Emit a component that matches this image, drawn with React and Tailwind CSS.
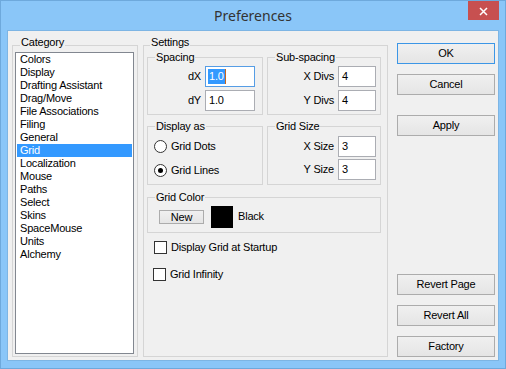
import React from "react";

const items = [
  "Colors",
  "Display",
  "Drafting Assistant",
  "Drag/Move",
  "File Associations",
  "Filing",
  "General",
  "Grid",
  "Localization",
  "Mouse",
  "Paths",
  "Select",
  "Skins",
  "SpaceMouse",
  "Units",
  "Alchemy",
];

function Group({ label, className, legendClass = "ml-[7px]", raise, children }) {
  return (
    <fieldset className={"border border-[#d5d5d5] min-w-0 " + className}>
      <legend className={"px-[1px] leading-[13px] " + legendClass}>
        <span className={raise ? "relative top-[-3px]" : ""}>{label}</span>
      </legend>
      {children}
    </fieldset>
  );
}

function TextBox({ value, w, focused }) {
  return (
    <div
      className={
        "h-[21px] bg-white border flex items-center pl-[2px] " +
        (focused ? "border-[#569de5] " : "border-[#abadb3] ") +
        w
      }
    >
      {focused ? (
        <span className="flex items-center">
          <span className="bg-[#3399ff] text-white leading-[15px] px-[1px]">{value}</span>
          <span className="w-[1px] h-[15px] bg-[#c8661e]" />
        </span>
      ) : (
        <span className="pl-[1px]">{value}</span>
      )}
    </div>
  );
}

function LabeledBox({ label, value, w, focused }) {
  return (
    <div className="flex items-center justify-end gap-[4px]">
      <span>{label}</span>
      <TextBox value={value} w={w} focused={focused} />
    </div>
  );
}

function Radio({ checked, label }) {
  return (
    <div className="h-[24px] flex items-center gap-[4px] pl-[6px]">
      <div className="w-[13px] h-[13px] rounded-full border border-[#333333] bg-white flex items-center justify-center">
        {checked && <div className="w-[5px] h-[5px] rounded-full bg-black" />}
      </div>
      <span>{label}</span>
    </div>
  );
}

function Check({ label, className }) {
  return (
    <div className={"flex items-center gap-[4px] h-[13px] " + className}>
      <div className="w-[13px] h-[13px] border border-[#333333] bg-white" />
      <span>{label}</span>
    </div>
  );
}

function Btn({ children, className = "", primary }) {
  return (
    <div
      className={
        "h-[21px] w-[98px] border bg-gradient-to-b from-[#f0f0f0] to-[#e5e5e5] flex items-center justify-center " +
        (primary ? "border-[#3c96e6] " : "border-[#acacac] ") +
        className
      }
    >
      {children}
    </div>
  );
}

export default function App() {
  return (
    <div className="w-[506px] h-[369px] bg-[#8ac6f8] border border-[#6ea9dc] flex flex-col relative overflow-hidden font-['Liberation_Sans',Arial,sans-serif] text-[11px] leading-[13px] tracking-[-0.2px] text-black">
      <div className="h-[29px] flex items-center justify-center relative">
        <span className="font-['Noto_Sans',sans-serif] text-[14px] tracking-normal text-[#333333] leading-[20px] mt-[1px]">
          Preferences
        </span>
        <div className="absolute top-[-1px] right-[6px] w-[31px] h-[20px] bg-[#c75050] flex items-center justify-center">
          <svg width="9" height="9" viewBox="0 0 9 9" className="mt-[2px]">
            <path d="M1 1L8 8M8 1L1 8" stroke="white" strokeWidth="1.5" />
          </svg>
        </div>
      </div>

      <div className="mx-[6px] h-[331px] border border-[#7db5e4] bg-[#f0f0f0] flex items-start">
        {/* Category */}
        <Group label="Category" raise className="ml-[4px] mt-[8px] w-[126px] h-[318px]">
          <div className="ml-[2px] w-[119px] h-[302px] border border-[#828790] bg-white px-[1px]">
            {items.map((it) => (
              <div
                key={it}
                className={
                  "h-[13px] leading-[13px] pl-[3px] " +
                  (it === "Grid" ? "bg-[#3399ff] text-white" : "")
                }
              >
                {it}
              </div>
            ))}
          </div>
        </Group>

        {/* Settings */}
        <Group
          label="Settings"
          raise
          legendClass="ml-[6px]"
          className="ml-[5px] mt-[8px] w-[245px] h-[318px]"
        >
          <div className="flex flex-col pl-[3px] mt-[-1px]">
            <div className="flex gap-[4px]">
              <Group label="Spacing" className="w-[116px] h-[64px]">
                <div className="flex flex-col gap-[3px] mt-[2px] pr-[7px]">
                  <LabeledBox label="dX" value="1.0" w="w-[50px]" focused />
                  <LabeledBox label="dY" value="1.0" w="w-[50px]" />
                </div>
              </Group>
              <Group label="Sub-spacing" className="w-[114px] h-[64px]">
                <div className="flex flex-col gap-[3px] mt-[2px] pr-[4px]">
                  <LabeledBox label="X Divs" value="4" w="w-[38px]" />
                  <LabeledBox label="Y Divs" value="4" w="w-[38px]" />
                </div>
              </Group>
            </div>

            <div className="flex gap-[4px] mt-[5px]">
              <Group label="Display as" className="w-[116px] h-[65px]">
                <div className="flex flex-col pt-[1px]">
                  <Radio label="Grid Dots" />
                  <Radio label="Grid Lines" checked />
                </div>
              </Group>
              <Group label="Grid Size" className="w-[114px] h-[65px]">
                <div className="flex flex-col gap-[2px] mt-[3px] pr-[4px]">
                  <LabeledBox label="X Size" value="3" w="w-[38px]" />
                  <LabeledBox label="Y Size" value="3" w="w-[38px]" />
                </div>
              </Group>
            </div>

            <Group label="Grid Color" className="mt-[6px] w-[234px] h-[42px]">
              <div className="flex items-center h-[22px] mt-[2px] pl-[11px]">
                <div className="w-[45px] h-[14px] border border-[#acacac] bg-gradient-to-b from-[#f0f0f0] to-[#e5e5e5] flex items-center justify-center">
                  New
                </div>
                <div className="ml-[7px] w-[22px] h-[22px] bg-black" />
                <span className="ml-[5px] mb-[2px]">Black</span>
              </div>
            </Group>

            <Check label="Display Grid at Startup" className="mt-[8px] ml-[7px]" />
            <Check label="Grid Infinity" className="mt-[14px] ml-[6px]" />
          </div>
        </Group>

        {/* Buttons */}
        <div className="ml-[9px] mt-[12px] h-[314px] flex flex-col justify-between">
          <div className="flex flex-col">
            <Btn primary>OK</Btn>
            <Btn className="mt-[10px]">Cancel</Btn>
            <Btn className="mt-[20px]">Apply</Btn>
          </div>
          <div className="flex flex-col">
            <Btn>Revert Page</Btn>
            <Btn className="mt-[10px]">Revert All</Btn>
            <Btn className="mt-[10px]">Factory</Btn>
          </div>
        </div>
      </div>
    </div>
  );
}
